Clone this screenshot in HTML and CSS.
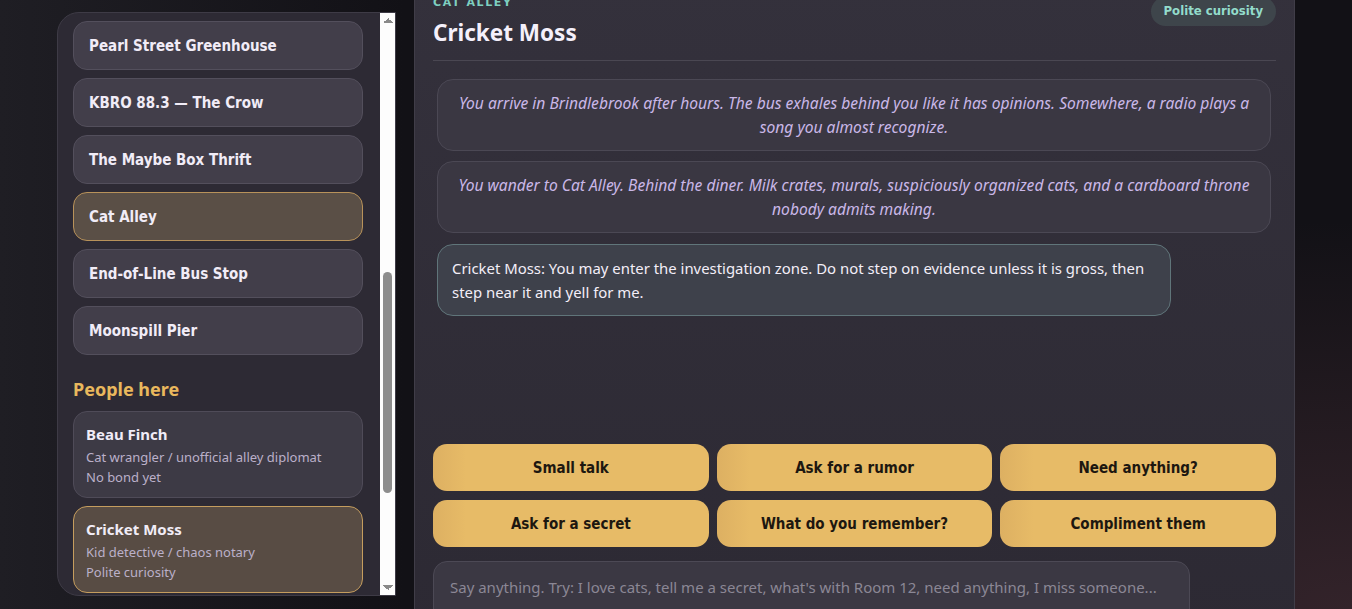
FILE: index.html
```html
<!DOCTYPE html>
<html lang="en">
<head>
    <meta charset="UTF-8">
    <meta name="viewport" content="width=device-width, initial-scale=1.0">
    <title>Brindlebrook</title>
    <link rel="stylesheet" href="styles.css">
</head>
<body>

<div class="layout">
    <aside class="sidebar">
        <div class="sidebar-list">
            <button class="place">Pearl Street Greenhouse</button>
            <button class="place">KBRO 88.3 — The Crow</button>
            <button class="place">The Maybe Box Thrift</button>
            <button class="place active">Cat Alley</button>
            <button class="place">End-of-Line Bus Stop</button>
            <button class="place">Moonspill Pier</button>

            <h3 class="section-title">People here</h3>

            <div class="person">
                <div class="person-name">Beau Finch</div>
                <div class="person-line">Cat wrangler / unofficial alley diplomat</div>
                <div class="person-line">No bond yet</div>
            </div>
            <div class="person active">
                <div class="person-name">Cricket Moss</div>
                <div class="person-line">Kid detective / chaos notary</div>
                <div class="person-line">Polite curiosity</div>
            </div>
        </div>
        <div class="scrollbar">
            <span class="scroll-arrow up"></span>
            <div class="scroll-track"><span class="scroll-thumb"></span></div>
            <span class="scroll-arrow down"></span>
        </div>
    </aside>

    <main class="chat">
        <div class="chat-header">
            <div>
                <div class="chat-place">Cat Alley</div>
                <h2 class="chat-name">Cricket Moss</h2>
            </div>
            <span class="bond-badge">Polite curiosity</span>
        </div>

        <div class="log">
            <div class="msg narration">You arrive in Brindlebrook after hours. The bus exhales behind you like it has opinions. Somewhere, a radio plays a song you almost recognize.</div>
            <div class="msg narration">You wander to Cat Alley. Behind the diner. Milk crates, murals, suspiciously organized cats, and a cardboard throne nobody admits making.</div>
            <div class="msg npc">Cricket Moss: You may enter the investigation zone. Do not step on evidence unless it is gross, then step near it and yell for me.</div>
        </div>

        <div class="actions">
            <button class="action">Small talk</button>
            <button class="action">Ask for a rumor</button>
            <button class="action">Need anything?</button>
            <button class="action">Ask for a secret</button>
            <button class="action">What do you remember?</button>
            <button class="action">Compliment them</button>
        </div>

        <form class="say">
            <textarea placeholder="Say anything. Try: I love cats, tell me a secret, what's with Room 12, need anything, I miss someone..."></textarea>
            <button type="submit" class="send">Say</button>
        </form>
    </main>
</div>

</body>
</html>
```

FILE: styles.css
```css
body {
    margin: 0;
    height: 609px;
    overflow: hidden;
    font-family: "Noto Sans", "Open Sans", sans-serif;
    color: #f1ecf7;
    background:
        radial-gradient(ellipse at 100% 100%, #33232a 0%, rgba(51, 35, 42, 0) 45%),
        linear-gradient(90deg, #1f1e24 0%, #121116 30%, #121116 100%);
}
.layout {
    max-width: 1238px;
    margin: 0 auto;
    display: grid;
    grid-template-columns: 339px 1fr;
    gap: 18px;
    align-items: start;
}

/* sidebar */
.sidebar {
    margin-top: 12px;
    height: 582px;
    display: flex;
    background-color: #2d2a34;
    border: 1px solid #3e3b46;
    border-radius: 22px 0 0 22px;
    overflow: hidden;
}
.sidebar-list {
    flex: 1;
    overflow: hidden;
    padding: 8px 17px 0 15px;
    display: flex;
    flex-direction: column;
    gap: 8px;
}
.place {
    font-family: "DejaVu Sans", sans-serif;
    font-stretch: condensed;
    font-weight: bold;
    font-size: 15px;
    line-height: 19px;
    text-align: left;
    color: #f1ecf7;
    background-color: #423e4a;
    border: 1px solid #534f5c;
    border-radius: 14px;
    padding: 15px 15px 13px;
    flex-shrink: 0;
}
.place.active {
    background-color: #5a4f46;
    border-color: #b8925a;
}
.section-title {
    margin: 14px 0 2px;
    font-size: 18px;
    font-weight: bold;
    line-height: 24px;
    color: #e9b85d;
}
.person {
    flex-shrink: 0;
    background-color: #3d3a45;
    border: 1px solid #4f4b58;
    border-radius: 14px;
    padding: 12px 12px 10px;
}
.person.active {
    background-color: #584c44;
    border-color: #c59d5e;
}
.person-name {
    font-weight: bold;
    font-size: 15px;
    line-height: 20px;
    margin-bottom: 3px;
}
.person-line {
    font-size: 13px;
    line-height: 20px;
    color: #bbb0c9;
}
.scrollbar {
    width: 15px;
    background-color: #fdfdfd;
    display: flex;
    flex-direction: column;
}
.scroll-arrow {
    height: 15px;
    flex-shrink: 0;
    background-repeat: no-repeat;
    background-size: 5px 5px;
}
.scroll-arrow.up {
    background-image:
        linear-gradient(to bottom right, transparent 50%, #8a8a8a 50%),
        linear-gradient(to bottom left, transparent 50%, #8a8a8a 50%);
    background-position: 3px 5px, 8px 5px;
}
.scroll-arrow.down {
    background-image:
        linear-gradient(to top right, transparent 50%, #8a8a8a 50%),
        linear-gradient(to top left, transparent 50%, #8a8a8a 50%);
    background-position: 3px 5px, 8px 5px;
}
.scroll-track {
    flex: 1;
    padding: 0 3px;
}
.scroll-thumb {
    display: block;
    margin-top: 244px;
    height: 221px;
    background-color: #8d8d8d;
    border-radius: 5px;
}

/* chat */
.chat {
    margin-top: -18px;
    height: 660px;
    padding: 14px 18px 0;
    background: linear-gradient(180deg, #34313c 0%, #2c2933 100%);
    border-left: 1px solid #403d48;
    border-right: 1px solid #403d48;
}
.chat-header {
    display: flex;
    justify-content: space-between;
    align-items: flex-start;
    padding-bottom: 12px;
    border-bottom: 1px solid #4a4752;
}
.chat-place {
    font-family: "DejaVu Sans", sans-serif;
    font-weight: bold;
    font-size: 11px;
    line-height: 14px;
    letter-spacing: 1.6px;
    text-transform: uppercase;
    color: #7ecfc0;
}
.chat-name {
    margin: 8px 0 0;
    font-size: 22.5px;
    line-height: 30px;
    font-weight: bold;
    color: #f5f0fb;
}
.bond-badge {
    margin-top: 1px;
    font-family: "DejaVu Sans", sans-serif;
    font-stretch: condensed;
    font-weight: bold;
    font-size: 13px;
    line-height: 17px;
    padding: 5px 13px 7px;
    border-radius: 16px;
    background-color: #3e454b;
    color: #93dccb;
}
.log {
    height: 353px;
    padding: 18px 5px 0 4px;
    display: flex;
    flex-direction: column;
    align-items: flex-start;
    gap: 10px;
}
.msg {
    line-height: 24px;
    border-radius: 16px;
    padding: 11px 14px;
}
.narration {
    align-self: stretch;
    text-align: center;
    font-size: 15.6px;
    font-style: italic;
    color: #cab8e8;
    background-color: #3a3742;
    border: 1px solid #4b4854;
}
.npc {
    box-sizing: border-box;
    max-width: 88%;
    margin-top: 1px;
    font-size: 14.9px;
    color: #f3eef8;
    background-color: #3e414b;
    border: 1px solid #60757a;
}
.actions {
    margin-top: 12px;
    display: grid;
    grid-template-columns: repeat(3, 1fr);
    gap: 9px 8px;
}
.action {
    height: 47px;
    font-family: "DejaVu Sans", sans-serif;
    font-stretch: condensed;
    font-weight: bold;
    font-size: 15px;
    color: #1d1710;
    background: linear-gradient(90deg, #ddb062 0%, #e7bb67 12%, #e7bb67 100%);
    border: none;
    border-radius: 14px;
}
.say {
    margin-top: 14px;
    display: grid;
    grid-template-columns: 1fr 78px;
    gap: 8px;
    align-items: end;
}
textarea {
    height: 100px;
    box-sizing: border-box;
    resize: none;
    font-family: "Noto Sans", sans-serif;
    font-size: 15px;
    line-height: 22px;
    padding: 14px 16px;
    color: #f1ecf7;
    background-color: #3b3843;
    border: 1px solid #4c4955;
    border-radius: 14px;
}
textarea::placeholder {
    color: #8b8795;
}
.send {
    height: 44px;
    border: none;
    border-radius: 14px;
    background-color: #e7bb67;
    font-weight: bold;
}
```
